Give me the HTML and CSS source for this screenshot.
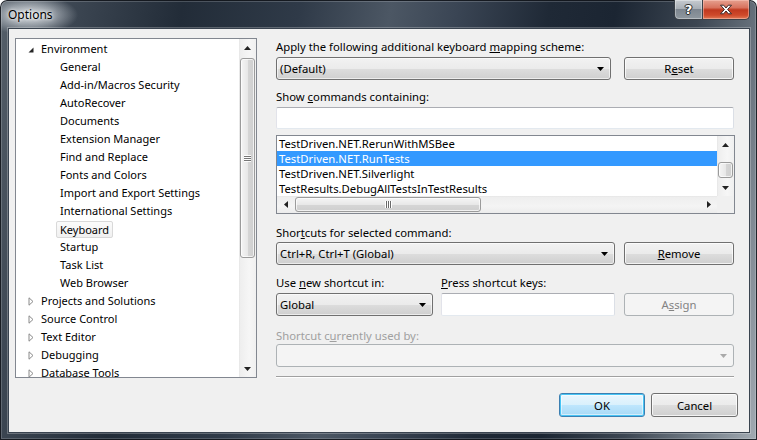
FILE: index.html
```html
<!DOCTYPE html>
<html>
<head>
<meta charset="utf-8">
<title>Options</title>
<link rel="stylesheet" href="styles.css">
</head>
<body>
<div class="window">
  <div class="titlebar">
    <span class="title">Options</span>
    <div class="caption-btns">
      <div class="cbtn help"><span>?</span></div>
      <div class="cbtn close">
        <svg width="14" height="11" viewBox="0 0 14 11"><path d="M1.5 1.2h3.2L7 4l2.3-2.8h3.2L8.6 5.5l3.9 4.3H9.3L7 7 4.7 9.8H1.5l3.9-4.3z" fill="#fff" stroke="#3a2a2a" stroke-width="1" stroke-linejoin="round"/></svg>
      </div>
    </div>
  </div>
  <div class="client">
    <div class="main">
      <div class="tree">
        <div class="tree-items">
          <div class="row top"><span class="exp-open"><svg width="6" height="6" viewBox="0 0 6 6"><path d="M5.5 0.5V5.5H0.5z" fill="#262626"/></svg></span><span class="txt">Environment</span></div>
          <div class="row child"><span class="txt">General</span></div>
          <div class="row child"><span class="txt">Add-in/Macros Security</span></div>
          <div class="row child"><span class="txt">AutoRecover</span></div>
          <div class="row child"><span class="txt">Documents</span></div>
          <div class="row child"><span class="txt">Extension Manager</span></div>
          <div class="row child"><span class="txt">Find and Replace</span></div>
          <div class="row child"><span class="txt">Fonts and Colors</span></div>
          <div class="row child"><span class="txt">Import and Export Settings</span></div>
          <div class="row child"><span class="txt">International Settings</span></div>
          <div class="row child"><span class="txt sel">Keyboard</span></div>
          <div class="row child"><span class="txt">Startup</span></div>
          <div class="row child"><span class="txt">Task List</span></div>
          <div class="row child"><span class="txt">Web Browser</span></div>
          <div class="row top"><span class="exp-closed"><svg width="6" height="9" viewBox="0 0 6 9"><path d="M1 0.8L5 4.5 1 8.2z" fill="#fff" stroke="#8a8a8a" stroke-width="1" stroke-linejoin="round"/></svg></span><span class="txt">Projects and Solutions</span></div>
          <div class="row top"><span class="exp-closed"><svg width="6" height="9" viewBox="0 0 6 9"><path d="M1 0.8L5 4.5 1 8.2z" fill="#fff" stroke="#8a8a8a" stroke-width="1" stroke-linejoin="round"/></svg></span><span class="txt">Source Control</span></div>
          <div class="row top"><span class="exp-closed"><svg width="6" height="9" viewBox="0 0 6 9"><path d="M1 0.8L5 4.5 1 8.2z" fill="#fff" stroke="#8a8a8a" stroke-width="1" stroke-linejoin="round"/></svg></span><span class="txt">Text Editor</span></div>
          <div class="row top"><span class="exp-closed"><svg width="6" height="9" viewBox="0 0 6 9"><path d="M1 0.8L5 4.5 1 8.2z" fill="#fff" stroke="#8a8a8a" stroke-width="1" stroke-linejoin="round"/></svg></span><span class="txt">Debugging</span></div>
          <div class="row top"><span class="exp-closed"><svg width="6" height="9" viewBox="0 0 6 9"><path d="M1 0.8L5 4.5 1 8.2z" fill="#fff" stroke="#8a8a8a" stroke-width="1" stroke-linejoin="round"/></svg></span><span class="txt">Database Tools</span></div>
        </div>
        <div class="vscroll">
          <div class="sb-btn"><svg width="7" height="4" viewBox="0 0 7 4"><path d="M3.5 0L7 4H0z" fill="#222"/></svg></div>
          <div class="sb-track tree-track">
            <div class="vthumb tree-thumb"><div class="grip-h"></div></div>
          </div>
          <div class="sb-btn"><svg width="7" height="4" viewBox="0 0 7 4"><path d="M0 0H7L3.5 4z" fill="#222"/></svg></div>
        </div>
      </div>

      <div class="panel">
        <div class="label first">Apply the following additional keyboard <u>m</u>apping scheme:</div>
        <div class="line gap3">
          <div class="combo w335"><span>(Default)</span><svg class="dd" width="7" height="4" viewBox="0 0 7 4"><path d="M0 0H7L3.5 4z" fill="#000"/></svg></div>
          <div class="btn w110 ml13">R<u>e</u>set</div>
        </div>
        <div class="label mt9">Show <u>c</u>ommands containing:</div>
        <div class="textbox full gap3"></div>
        <div class="listbox">
          <div class="lb-body">
            <div class="lb-rows">
              <div class="lrow">TestDriven.NET.RerunWithMSBee</div>
              <div class="lrow selrow">TestDriven.NET.RunTests</div>
              <div class="lrow">TestDriven.NET.Silverlight</div>
              <div class="lrow">TestResults.DebugAllTestsInTestResults</div>
            </div>
            <div class="lb-vscroll">
              <div class="sb-btn"><svg width="7" height="4" viewBox="0 0 7 4"><path d="M3.5 0L7 4H0z" fill="#222"/></svg></div>
              <div class="sb-track lb-track"><div class="vthumb lb-thumb"></div></div>
              <div class="sb-btn"><svg width="7" height="4" viewBox="0 0 7 4"><path d="M0 0H7L3.5 4z" fill="#222"/></svg></div>
            </div>
          </div>
          <div class="lb-hrow">
            <div class="hscroll">
              <div class="hsb-btn"><svg width="4" height="7" viewBox="0 0 4 7"><path d="M4 0V7L0 3.5z" fill="#222"/></svg></div>
              <div class="hthumb"><div class="grip-v"></div></div>
              <div class="hsb-fill"></div>
              <div class="hsb-btn"><svg width="4" height="7" viewBox="0 0 4 7"><path d="M0 0L4 3.5 0 7z" fill="#222"/></svg></div>
            </div>
            <div class="corner"></div>
          </div>
        </div>
        <div class="label mt11">Shor<u>t</u>cuts for selected command:</div>
        <div class="line gap2">
          <div class="combo w339"><span>Ctrl+R, Ctrl+T (Global)</span><svg class="dd" width="7" height="4" viewBox="0 0 7 4"><path d="M0 0H7L3.5 4z" fill="#000"/></svg></div>
          <div class="btn w110 ml9"><u>R</u>emove</div>
        </div>
        <div class="line mt10">
          <div class="label w157">Use <u>n</u>ew shortcut in:</div>
          <div class="label ml8"><u>P</u>ress shortcut keys:</div>
        </div>
        <div class="line gap3">
          <div class="combo w157"><span>Global</span><svg class="dd" width="7" height="4" viewBox="0 0 7 4"><path d="M0 0H7L3.5 4z" fill="#000"/></svg></div>
          <div class="textbox w174 ml8"></div>
          <div class="btn disabled w110 ml9">A<u>s</u>sign</div>
        </div>
        <div class="label disabled-text mt12">Shortcut c<u>u</u>rrently used by:</div>
        <div class="combo disabled full gap1"><span></span><svg class="dd" width="7" height="4" viewBox="0 0 7 4"><path d="M0 0H7L3.5 4z" fill="#a9a9a9"/></svg></div>
        <div class="separator"></div>
      </div>
    </div>
    <div class="footer">
      <div class="btn default w86">OK</div>
      <div class="btn w87 ml6">Cancel</div>
    </div>
  </div>
</div>
</body>
</html>
```

FILE: styles.css
```css
* { box-sizing: border-box; }
html, body { margin: 0; padding: 0; background: #ffffff; }
body {
  font-family: "Noto Sans", "Open Sans", "DejaVu Sans", sans-serif;
  font-size: 11.3px;
  color: #000;
}
u { text-decoration: underline; text-underline-offset: 1px; }

.window {
  width: 757px;
  height: 440px;
  padding: 0 7px 7px 8px;
  display: flex;
  flex-direction: column;
  border-radius: 7px 7px 0 0;
  background:
    radial-gradient(ellipse 48px 20px at 30px 15px, rgba(226,230,234,0.95), rgba(200,206,212,0.55) 55%, rgba(150,160,170,0) 100%),
    linear-gradient(100deg, #56606a 0%, #3e4854 8%, #222c38 22%, #2f3a48 36%, #4c5764 47%, #3a4554 55%, #1f2936 66%, #1b2532 74%, #3c4652 84%, #7a848e 94%, #a3abb3 100%);
  box-shadow: inset 0 0 0 1px rgba(10,14,20,0.85), inset 0 0 0 2px rgba(255,255,255,0.18);
}

.titlebar {
  height: 28px;
  display: flex;
  align-items: flex-start;
  justify-content: space-between;
}
.title {
  margin-top: 7px;
  font-size: 12px;
  line-height: 16px;
  color: #000;
  text-shadow: 0 0 6px rgba(255,255,255,0.9), 0 0 3px rgba(255,255,255,0.9);
}
.caption-btns { display: flex; height: 20px; }
.cbtn {
  height: 20px;
  display: flex;
  align-items: center;
  justify-content: center;
  border: 1px solid #3b4148;
  border-top: none;
}
.help {
  width: 28px;
  border-radius: 0 0 0 5px;
  border-right: none;
  background: linear-gradient(#c6cbd0 0%, #a8afb6 45%, #7d8690 50%, #8f989f 100%);
  box-shadow: inset 0 0 0 1px rgba(255,255,255,0.35);
}
.help span {
  font-family: "DejaVu Sans", sans-serif;
  font-weight: bold;
  font-size: 13px;
  color: #fff;
  text-shadow: 0 0 1px #222, 0 0 1px #222, 1px 0 0 #333, -1px 0 0 #333, 0 1px 0 #333, 0 -1px 0 #333;
}
.close {
  width: 48px;
  border-radius: 0 0 5px 0;
  background: linear-gradient(#e6a08f 0%, #d8735e 40%, #c0391f 52%, #cf4a2b 80%, #e07a56 100%);
  box-shadow: inset 0 0 0 1px rgba(255,210,200,0.45);
}

.client {
  flex: 1;
  display: flex;
  flex-direction: column;
  background: #f0f0f0;
  border: 1px solid #39434f;
  box-shadow: 0 0 0 1px rgba(255,255,255,0.25);
  padding: 9px 11px 15px 6px;
}
.main { display: flex; height: 340px; }

/* tree */
.tree {
  width: 242px;
  height: 340px;
  border: 1px solid #828790;
  background: #fff;
  display: flex;
  overflow: hidden;
}
.tree-items { flex: 1; overflow: hidden; padding-top: 1px; }
.row {
  height: 18px;
  display: flex;
  align-items: center;
  white-space: nowrap;
  font-size: 11px;
}
.row.top { padding-left: 12px; }
.row.child { padding-left: 44px; }
.exp-open, .exp-closed {
  width: 13px;
  display: flex;
  align-items: center;
}
.exp-open svg { margin-top: 1px; }
.exp-closed svg { margin-top: 1px; margin-left: 0; }
.txt { line-height: 16px; }
.txt.sel {
  margin-left: -4px;
  padding: 0 3px;
  height: 17px;
  margin-top: 0;
  line-height: 15px;
  border: 1px solid #d9d9d9;
  border-radius: 2px;
  background: linear-gradient(#fbfbfb, #f0f0f0);
}

.vscroll {
  width: 17px;
  display: flex;
  flex-direction: column;
  background: linear-gradient(90deg, #e3e3e3 0, #eeeeee 1px, #f6f6f6 60%, #f0f0f0 100%);
}
.sb-btn {
  height: 17px;
  display: flex;
  align-items: center;
  justify-content: center;
}
.sb-track { flex: 1; display: flex; flex-direction: column; }
.vthumb {
  margin: 0 1px;
  border: 1px solid #9b9b9b;
  border-radius: 3px;
  background: linear-gradient(90deg, #f5f5f5 0%, #e8e8e8 50%, #d6d6d6 51%, #cfcfcf 100%);
  box-shadow: inset 0 0 0 1px rgba(255,255,255,0.7);
  display: flex;
  align-items: center;
  justify-content: center;
}
.tree-thumb { height: 200px; margin-top: 2px; }
.grip-h {
  width: 7px;
  height: 7px;
  background: repeating-linear-gradient(#fff 0 1px, #6a6a6a 1px 2px);
  opacity: 0.9;
}

/* right panel */
.panel {
  width: 458px;
  margin-left: 19px;
  margin-right: 4px;
  display: flex;
  flex-direction: column;
}
.label { line-height: 15px; height: 15px; white-space: nowrap; }
.label.first { margin-top: 1px; }
.disabled-text { color: #a0a0a0; }
.line { display: flex; }
.gap1 { margin-top: 1px; }
.gap2 { margin-top: 2px; }
.gap3 { margin-top: 3px; }
.mt9 { margin-top: 9px; }
.mt10 { margin-top: 10px; }
.mt11 { margin-top: 11px; }
.mt12 { margin-top: 12px; }
.ml6 { margin-left: 6px; }
.ml8 { margin-left: 8px; }
.ml9 { margin-left: 9px; }
.ml13 { margin-left: 13px; }
.w86 { width: 86px; }
.w87 { width: 87px; }
.w110 { width: 110px; }
.w157 { width: 157px; }
.w174 { width: 174px; }
.w335 { width: 335px; }
.w339 { width: 339px; }
.full { width: 458px; }

.combo {
  height: 23px;
  border: 1px solid #707070;
  border-radius: 3px;
  background: linear-gradient(#f2f2f2 0%, #ebebeb 50%, #dddddd 51%, #cfcfcf 100%);
  box-shadow: inset 0 0 0 1px rgba(255,255,255,0.6);
  display: flex;
  align-items: center;
  justify-content: space-between;
  padding: 0 6px 0 3px;
  line-height: 15px;
}
.combo .dd { flex: none; }
.combo.disabled {
  border-color: #adb2b5;
  background: #f4f4f4;
  box-shadow: none;
}

.btn {
  height: 23px;
  border: 1px solid #707070;
  border-radius: 3px;
  background: linear-gradient(#f2f2f2 0%, #ebebeb 50%, #dddddd 51%, #cfcfcf 100%);
  box-shadow: inset 0 0 0 1px rgba(255,255,255,0.75);
  display: flex;
  align-items: center;
  justify-content: center;
  line-height: 15px;
}
.btn.disabled {
  border-color: #adb2b5;
  background: #f4f4f4;
  box-shadow: none;
  color: #838383;
}
.btn.default {
  border-color: #3c7fb1;
  background: linear-gradient(#eaf6fd 0%, #d9f0fc 50%, #bee6fd 51%, #a7d9f5 100%);
  box-shadow: inset 0 0 0 1px #48c5f5, inset 0 0 0 2px rgba(255,255,255,0.5);
}

.textbox {
  height: 22px;
  background: #fff;
  border: 1px solid #abadb3;
  border-left-color: #e2e3ea;
  border-right-color: #dbdfe6;
  border-bottom-color: #e3e9ef;
  border-radius: 2px;
}
.textbox.w174 { height: 23px; }

.listbox {
  margin-top: 6px;
  width: 459px;
  height: 79px;
  border: 1px solid #828790;
  background: #fff;
  display: flex;
  flex-direction: column;
}
.lb-body { display: flex; height: 60px; }
.lb-rows { flex: 1; overflow: hidden; }
.lrow {
  height: 15px;
  line-height: 15px;
  padding-left: 2px;
  white-space: nowrap;
}
.selrow { background: #3399ff; color: #fff; }
.lb-vscroll {
  width: 17px;
  display: flex;
  flex-direction: column;
  background: linear-gradient(90deg, #e3e3e3 0, #eeeeee 1px, #f6f6f6 60%, #f0f0f0 100%);
}
.lb-track { padding-top: 9px; }
.lb-thumb { height: 16px; margin-top: 0; }
.lb-vscroll .sb-btn { height: 17px; }
.lb-vscroll .sb-track { flex: 1; }

.lb-hrow { display: flex; height: 17px; }
.hscroll {
  flex: 1;
  display: flex;
  align-items: stretch;
  background: linear-gradient(#e3e3e3 0, #eeeeee 1px, #f4f4f4 60%, #ececec 100%);
}
.hsb-btn {
  width: 17px;
  display: flex;
  align-items: center;
  justify-content: center;
}
.hthumb {
  width: 186px;
  margin: 1px 0 1px 1px;
  border: 1px solid #9b9b9b;
  border-radius: 3px;
  background: linear-gradient(#f5f5f5 0%, #e8e8e8 50%, #d6d6d6 51%, #cfcfcf 100%);
  box-shadow: inset 0 0 0 1px rgba(255,255,255,0.7);
  display: flex;
  align-items: center;
  justify-content: center;
}
.grip-v {
  width: 7px;
  height: 7px;
  background: repeating-linear-gradient(90deg, #fff 0 1px, #6a6a6a 1px 2px);
}
.hsb-fill { flex: 1; }
.corner { width: 17px; background: #f0f0f0; }

.separator {
  margin-top: 9px;
  height: 2px;
  border-top: 1px solid #a0a0a0;
  border-bottom: 1px solid #ffffff;
}

.footer {
  margin-top: 15px;
  display: flex;
  justify-content: flex-end;
  height: 24px;
}
.footer .btn { height: 24px; }
```
